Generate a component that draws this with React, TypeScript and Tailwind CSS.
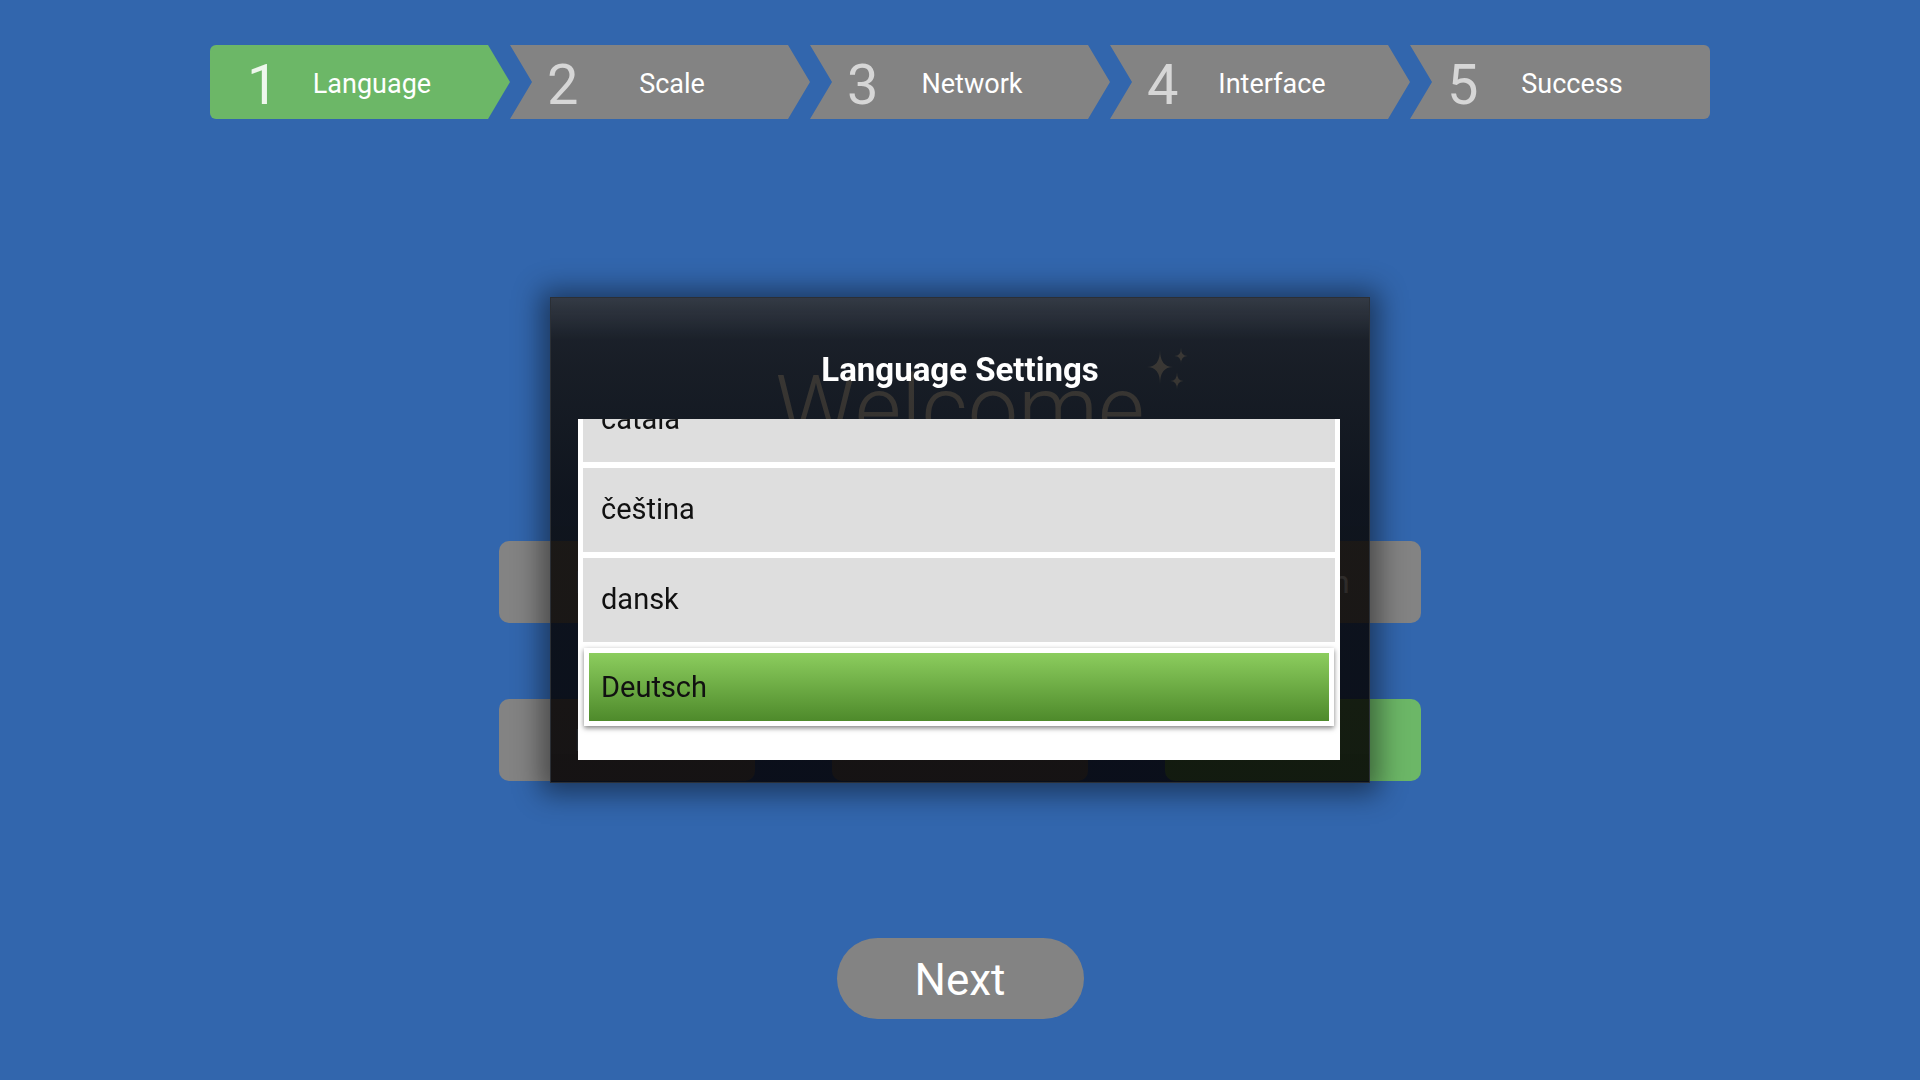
import React from 'react';

type Step = { n: number; label: string };

const steps: Step[] = [
  { n: 1, label: 'Language' },
  { n: 2, label: 'Scale' },
  { n: 3, label: 'Network' },
  { n: 4, label: 'Interface' },
  { n: 5, label: 'Success' },
];

const quickPicks = ['English', 'Français', 'Russian', 'Italiano', 'Chinese', 'More'];

const languages = ['català', 'čeština', 'dansk', 'Deutsch'];

function StepBar({ current }: { current: number }) {
  return (
    <div className="mx-auto flex w-[1500px]">
      {steps.map((s, i) => {
        const first = i === 0;
        const last = i === steps.length - 1;
        const active = s.n === current;
        const shape = first
          ? 'rounded-l-[6px] [clip-path:polygon(0_0,278px_0,100%_50%,278px_100%,0_100%)]'
          : last
            ? 'rounded-r-[6px] [clip-path:polygon(0_0,100%_0,100%_100%,0_100%,22px_50%)]'
            : '[clip-path:polygon(0_0,278px_0,100%_50%,278px_100%,0_100%,22px_50%)]';
        return (
          <div
            key={s.n}
            className={`flex h-[74px] w-[300px] items-center pt-[5px] pr-[44px] ${shape} ${
              active ? 'bg-[#6cb767]' : 'bg-[#838383]'
            }`}
          >
            <span
              className={`ml-[37px] w-[31px] text-[56px] leading-none ${
                active ? 'text-[#eef7ec]' : 'text-[#d6d6d6]'
              }`}
            >
              {s.n}
            </span>
            <span className="flex-1 text-center text-[27px] leading-none text-white">{s.label}</span>
          </div>
        );
      })}
    </div>
  );
}

function Sparkles({ className }: { className?: string }) {
  // three four-point stars, concave sides
  const star = (cx: number, cy: number, w: number, h: number) =>
    `M${cx} ${cy - h}Q${cx} ${cy} ${cx + w} ${cy}Q${cx} ${cy} ${cx} ${cy + h}Q${cx} ${cy} ${cx - w} ${cy}Q${cx} ${cy} ${cx} ${cy - h}Z`;
  return (
    <svg viewBox="0 0 48 44" className={className} fill="currentColor">
      <path d={star(15, 19, 13, 17)} />
      <path d={star(36, 8, 6.5, 8)} />
      <path d={star(32, 33, 6.5, 8.5)} />
    </svg>
  );
}

function LanguageDialog({ selected }: { selected: string }) {
  return (
    <div className="fixed inset-0 flex items-center justify-center">
      <div className="flex h-[484px] w-[818px] flex-col bg-[linear-gradient(180deg,rgba(52,52,54,0.88)_0px,rgba(22,19,16,0.84)_42px,rgba(19,16,12,0.84)_70px,rgba(9,6,3,0.84)_200px,rgba(4,1,2,0.86)_100%)] shadow-[0_2px_26px_10px_rgba(0,0,0,0.45)] ring-1 ring-[#2b2f35]">
        <h2 className="pt-[52px] text-center text-[33px] font-bold leading-[40px] text-white">Language Settings</h2>
        <div className="mt-[29px] ml-[27px] h-[341px] w-[762px] overflow-hidden bg-white px-[5px]">
          <div className="-mt-[41px] flex flex-col gap-[6px]">
            {languages.map((l) =>
              l === selected ? (
                <div key={l} className="mx-[1px] h-[78px] bg-white p-[5px] shadow-[0_2px_5px_rgba(0,0,0,0.5)]">
                  <div className="flex h-full items-center bg-[linear-gradient(to_bottom,#8ccd5e,#4e8a2b)] pl-[12px] pt-[2px] text-[29px] text-[#111]">
                    {l}
                  </div>
                </div>
              ) : (
                <div key={l} className="flex h-[84px] items-center bg-[#dedede] pl-[18px] text-[29px] text-[#111]">
                  {l}
                </div>
              ),
            )}
          </div>
        </div>
      </div>
    </div>
  );
}

export default function App() {
  return (
    <div className="relative h-[1080px] w-full overflow-hidden bg-[#3266ad] pt-[45px] font-[Roboto,sans-serif]">
      <StepBar current={1} />

      <div className="relative mx-auto mt-[246px] w-fit">
        <h1 className="text-[90px] font-light leading-none text-white">Welcome</h1>
        <Sparkles className="absolute left-full top-[-17px] h-[44px] w-[48px] text-white" />
      </div>

      <div className="mx-auto mt-[86px] grid w-[922px] grid-cols-3 gap-x-[77px] gap-y-[76px]">
        {quickPicks.map((p, i) => (
          <button
            key={p}
            className={`h-[82px] rounded-[10px] text-[32px] text-white ${
              i === quickPicks.length - 1 ? 'bg-[#6cb767]' : 'bg-[#838383]'
            }`}
          >
            {p}
          </button>
        ))}
      </div>

      <div className="mt-[157px] flex justify-center">
        <button className="h-[81px] w-[247px] rounded-full bg-[#838383] pt-[2px] text-[44px] text-white">Next</button>
      </div>

      <LanguageDialog selected="Deutsch" />
    </div>
  );
}
